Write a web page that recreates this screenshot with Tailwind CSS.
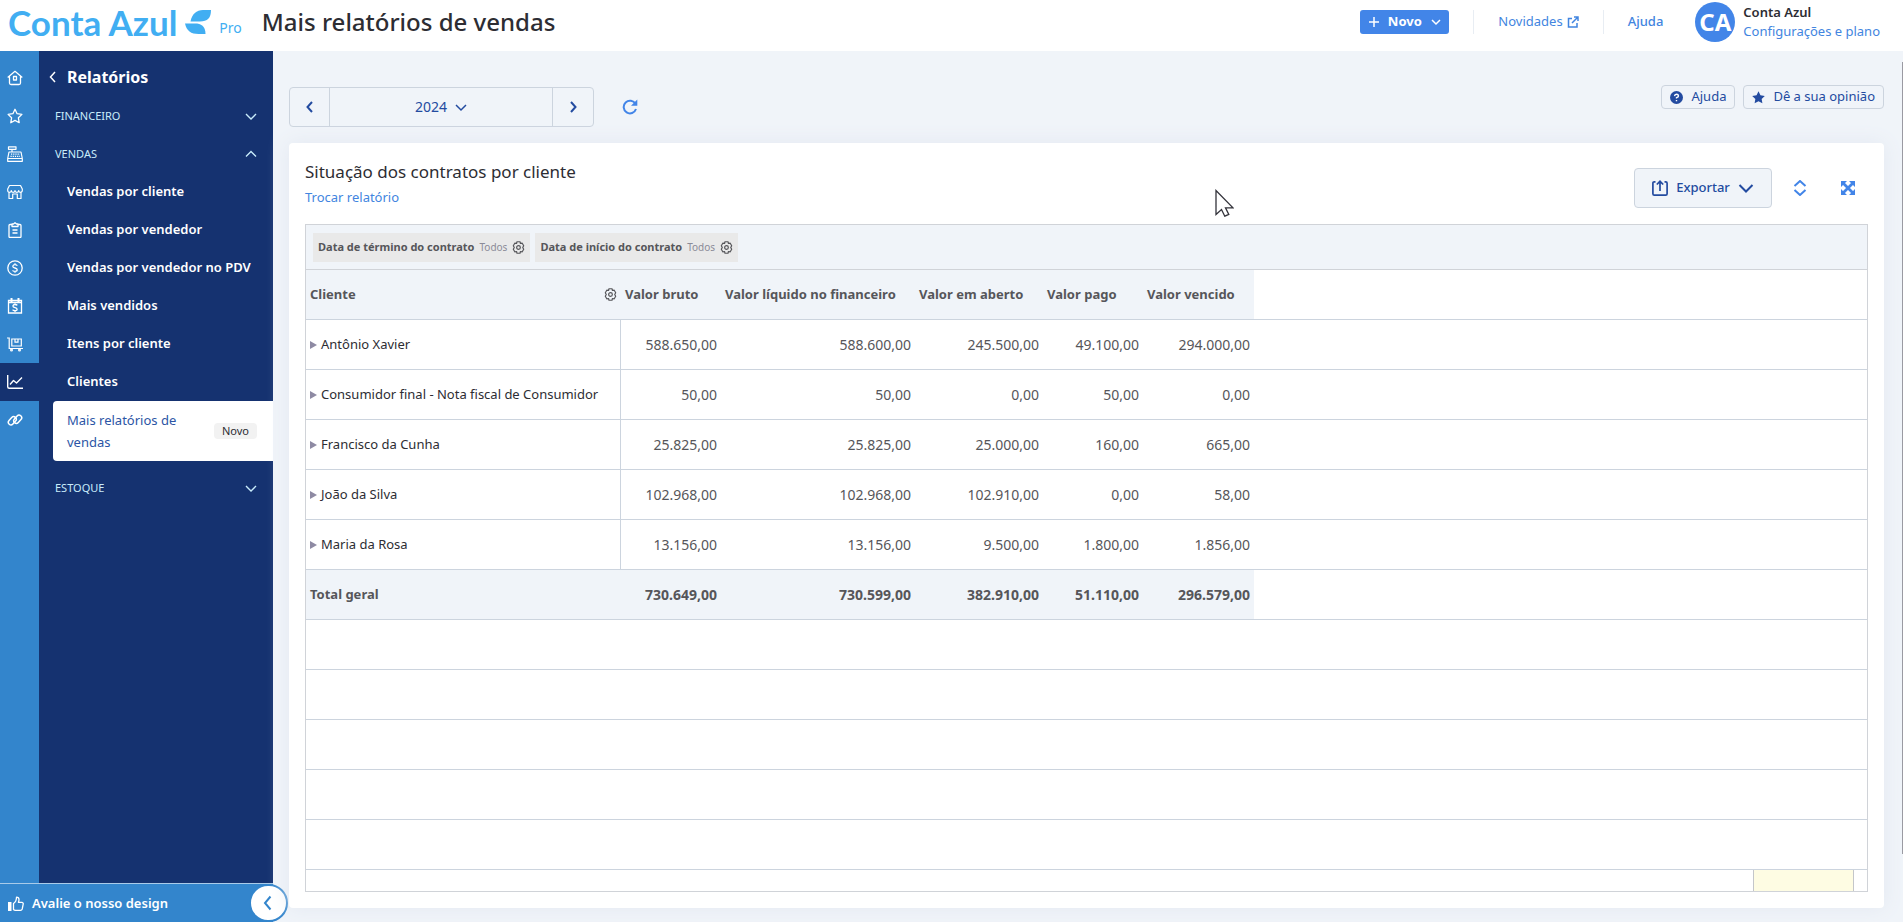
<!DOCTYPE html>
<html lang="pt-BR">
<head>
    <meta charset="UTF-8">
    <meta name="viewport" content="width=device-width, initial-scale=1.0">
    <title>Conta Azul - Mais relatórios de vendas</title>
    <script src="https://cdn.jsdelivr.net/npm/@tailwindcss/browser@4"></script>
</head>
<body class="min-h-screen flex flex-col bg-[#f0f4f9] font-['Noto_Sans',sans-serif] text-[13px] text-[#2d2d33] overflow-hidden">
    <!-- Cabeçalho -->
    <header class="h-[51px] bg-white flex items-center justify-between pl-2 pr-[23px]">
        <div class="flex items-center">
            <a href="#" class="flex items-center text-[#41aef2]" aria-label="Conta Azul Pro">
                <span class="font-['Lato',sans-serif] font-bold text-[35px] leading-8 -mt-2">Conta Azul</span>
                <svg class="w-[26px] h-7 ml-2 -mt-2" viewBox="0 0 26 28" fill="currentColor">
                    <path d="M26 2C26 10 22.500 13.500 15 13.500H5.500C7 6 11.500 2 18 2z"/>
                    <path d="M0 15.500H10C16 15.500 20.500 18 20.500 26H13.500C6 26 1.500 23 0 15.500z"/>
                </svg>
                <span class="text-sm leading-4 ml-2 mt-1">Pro</span>
            </a>
            <h1 class="text-[24px] leading-8 font-medium ml-5 -mt-2">Mais relatórios de vendas</h1>
        </div>
        <div class="flex items-center -mt-2">
            <button class="h-6 w-[89px] rounded-[3px] bg-[#4285e8] text-white font-bold flex items-center justify-center gap-2">
                <svg class="w-3 h-3" viewBox="0 0 12 12" fill="none" stroke="currentColor" stroke-width="1.500"><path d="M6 1v10M1 6h10"/></svg>
                Novo
                <svg class="w-3 h-3" viewBox="0 0 12 12" fill="none" stroke="currentColor" stroke-width="1.500"><path d="M2 4l4 4 4-4"/></svg>
            </button>
            <span class="w-px h-6 bg-[#e8edf3] ml-6 mr-6"></span>
            <a href="#" class="text-[#4285e0] flex items-center gap-1">Novidades
                <svg class="w-3 h-3" viewBox="0 0 12 12" fill="none" stroke="currentColor" stroke-width="1.500"><path d="M5 2.500H1.500v8.500H10V7M7 1h4v4M11 1L5 7"/></svg>
            </a>
            <span class="w-px h-6 bg-[#e8edf3] ml-6 mr-6"></span>
            <a href="#" class="text-[#4285e0] font-medium">Ajuda</a>
            <span class="w-10 h-10 rounded-full bg-[#4285e8] text-white text-[24px] font-bold flex items-center justify-center ml-8">CA</span>
            <div class="ml-2 leading-[19px]">
                <p class="font-semibold">Conta Azul</p>
                <a href="#" class="text-[#4285e0]">Configurações e plano</a>
            </div>
        </div>
    </header>

    <div class="flex flex-1">
        <!-- Menu lateral -->
        <aside class="relative w-[273px] shrink-0 flex flex-col text-white">
            <div class="flex flex-1">
                <nav class="w-[39px] bg-[#3385cc] pt-2 flex flex-col" aria-label="Módulos">
                    <a href="#" aria-label="Início" class="h-[38px] pl-[7px] flex items-center">
                        <svg class="w-4 h-4" viewBox="0 0 16 16" fill="none" stroke="currentColor" stroke-width="1.300" stroke-linejoin="round"><path d="M.7 7.500L8 1.300l7.300 6.200M2.500 6.500V13q0 1.500 1.500 1.500h8q1.500 0 1.500-1.500V6.500"/><rect x="6.500" y="6.500" width="3" height="3.500"/></svg>
                    </a>
                    <a href="#" aria-label="Favoritos" class="h-[38px] pl-[7px] flex items-center">
                        <svg class="w-4 h-4" viewBox="0 0 16 16" fill="none" stroke="currentColor" stroke-width="1.300" stroke-linejoin="round"><path d="M8 1.300l2.100 4.400 4.800.7-3.500 3.400.8 4.900L8 12.400l-4.200 2.300.8-4.900L1.100 6.400l4.800-.7z"/></svg>
                    </a>
                    <a href="#" aria-label="Caixa" class="h-[38px] pl-[7px] flex items-center">
                        <svg class="w-4 h-4" viewBox="0 0 16 16" fill="none" stroke="currentColor" stroke-width="1.200" stroke-linejoin="round"><path d="M1.500.8h7.500v2.500H1.500zM5 3.300V6M2 6h12l1.300 6.500H.7zM.7 12.500h14.600v2.800H.7z"/><path d="M4 8.200h9M3.500 10.300h9.500" stroke-dasharray="1.200 1"/></svg>
                    </a>
                    <a href="#" aria-label="Loja" class="h-[38px] pl-[7px] flex items-center">
                        <svg class="w-4 h-4" viewBox="0 0 16 16" fill="none" stroke="currentColor" stroke-width="1.200" stroke-linejoin="round"><path d="M2.500 1.500h11L15.300 5v1.500a1.800 1.800 0 0 1-3.600 0 1.800 1.800 0 0 1-3.700 0 1.800 1.800 0 0 1-3.700 0 1.800 1.800 0 0 1-3.600 0V5zM2 8.300v6.200h3.700v-4.500h4.600v4.500H14V8.300"/></svg>
                    </a>
                    <a href="#" aria-label="Pedidos" class="h-[38px] pl-[7px] flex items-center">
                        <svg class="w-4 h-4" viewBox="0 0 16 16" fill="none" stroke="currentColor" stroke-width="1.300" stroke-linejoin="round"><path d="M5 2.500H3q-1 0-1 1v11q0 1 1 1h10q1 0 1-1v-11q0-1-1-1h-2M5 4.500V2h1.500L8 .7 9.500 2H11v2.500zM5.500 8h5M5.500 11h5"/></svg>
                    </a>
                    <a href="#" aria-label="Financeiro" class="h-[38px] pl-[7px] flex items-center">
                        <svg class="w-4 h-4" viewBox="0 0 16 16" fill="none" stroke="currentColor" stroke-width="1.300"><circle cx="8" cy="8" r="7.200"/><path d="M10.300 5.800Q9.800 4.600 8 4.600T5.800 6.200Q5.800 7.500 8 8t2.200 1.800Q10.200 11.400 8 11.400T5.700 10.200M8 3.300v1.300M8 11.400v1.300"/></svg>
                    </a>
                    <a href="#" aria-label="Cobranças" class="h-[38px] pl-[7px] flex items-center">
                        <svg class="w-4 h-4" viewBox="0 0 16 16" fill="none" stroke="currentColor" stroke-width="1.300"><path d="M1.500 2.500h13v12.500h-13zM1.500 4.500h13" /><path d="M4.500 0v4M11.500 0v4" stroke-width="2"/><path d="M10.300 7.300Q9.800 6.500 8 6.500T5.900 8Q5.900 9.200 8 9.600t2.100 1.600Q10.100 12.700 8 12.700T5.700 11.700M8 5.300v1.200M8 12.700v1.200"/></svg>
                    </a>
                    <a href="#" aria-label="Estoque" class="h-[38px] pl-[7px] flex items-center">
                        <svg class="w-4 h-4" viewBox="0 0 16 16" fill="none" stroke="currentColor" stroke-width="1.200"><path d="M0 2h2.200v10.500H16M4.800 3h9.500v7H4.800zM8 3v3.200h3V3"/><circle cx="4.500" cy="14" r=".9"/><circle cx="12.500" cy="14" r=".9"/></svg>
                    </a>
                    <a href="#" aria-label="Relatórios" class="h-[38px] pl-[7px] flex items-center bg-[#153270]">
                        <svg class="w-4 h-4" viewBox="0 0 16 16" fill="none" stroke="currentColor" stroke-width="1.400" stroke-linejoin="round"><path d="M.7 1v11.800q0 1.500 1.500 1.500H16M3 10.500L6.500 6.500l3 2.500L15 3.500"/></svg>
                    </a>
                    <a href="#" aria-label="Integrações" class="h-[38px] pl-[7px] flex items-center">
                        <svg class="w-4 h-4" viewBox="0 0 16 16" fill="none" stroke="currentColor" stroke-width="1.500"><rect x="-2.600" y="-4.600" width="5.200" height="9.200" rx="2.600" transform="translate(5.300 8.800) rotate(42)"/><rect x="-2.600" y="-4.600" width="5.200" height="9.200" rx="2.600" transform="translate(10.700 7.200) rotate(42)"/></svg>
                    </a>
                </nav>
                <nav class="flex-1 bg-[#153270] pt-2" aria-label="Relatórios">
                    <a href="#" class="h-[38px] pb-0.5 pl-2 flex items-center gap-2 text-base font-bold">
                        <svg class="w-3 h-3" viewBox="0 0 12 12" fill="none" stroke="currentColor" stroke-width="1.500"><path d="M8 1L3.500 6 8 11"/></svg>
                        Relatórios
                    </a>
                    <button class="w-full h-[38px] pl-4 pr-4 flex items-center justify-between text-[11px] text-[#c9ecfb]">FINANCEIRO
                        <svg class="w-3 h-3" viewBox="0 0 12 12" fill="none" stroke="currentColor" stroke-width="1.400"><path d="M1 4l5 5 5-5"/></svg>
                    </button>
                    <button class="w-full h-[38px] pl-4 pr-4 flex items-center justify-between text-[11px] text-[#c9ecfb]">VENDAS
                        <svg class="w-3 h-3" viewBox="0 0 12 12" fill="none" stroke="currentColor" stroke-width="1.400"><path d="M1 8.500l5-5 5 5"/></svg>
                    </button>
                    <a href="#" class="h-[38px] pl-7 flex items-center font-semibold">Vendas por cliente</a>
                    <a href="#" class="h-[38px] pl-7 flex items-center font-semibold">Vendas por vendedor</a>
                    <a href="#" class="h-[38px] pl-7 flex items-center font-semibold">Vendas por vendedor no PDV</a>
                    <a href="#" class="h-[38px] pl-7 flex items-center font-semibold">Mais vendidos</a>
                    <a href="#" class="h-[38px] pl-7 flex items-center font-semibold">Itens por cliente</a>
                    <a href="#" class="h-[38px] pl-7 flex items-center font-semibold">Clientes</a>
                    <a href="#" class="h-[60px] ml-[14px] pl-[14px] pr-4 rounded-l-[4px] bg-white text-[#2c55a5] leading-[22px] flex items-center justify-between">
                        <span class="w-[130px]">Mais relatórios de vendas</span>
                        <span class="h-4 px-2 rounded-[4px] bg-[#f2f2f2] text-[#2d2d33] text-[11px] leading-4">Novo</span>
                    </a>
                    <button class="w-full h-[38px] mt-2 pl-4 pr-4 flex items-center justify-between text-[11px] text-[#c9ecfb]">ESTOQUE
                        <svg class="w-3 h-3" viewBox="0 0 12 12" fill="none" stroke="currentColor" stroke-width="1.400"><path d="M1 4l5 5 5-5"/></svg>
                    </button>
                </nav>
            </div>
            <a href="#" class="h-[39px] border-t border-[#a9cbe9] bg-[#3385cc] pt-0.5 pl-2 flex items-center gap-2 font-semibold">
                <svg class="w-4 h-4" viewBox="0 0 16 16" fill="none" stroke="currentColor" stroke-width="1.300" stroke-linejoin="round"><path d="M0 6h3.500v9H0z" fill="currentColor" stroke="none"/><path d="M5.500 7.500Q8.500 5.500 8.500 1.200q2.500 0 2.500 2.300 0 1.300-.6 2.800H14q1.500.3 1.200 1.800l-1 4.900q-.4 1.300-1.700 1.300H7.500q-1.300 0-2-.8z"/></svg>
                Avalie o nosso design
            </a>
            <button aria-label="Recolher menu" class="absolute left-[249px] bottom-0 w-[39px] h-[38px] rounded-full bg-white border-2 border-[#3385cc] text-[#3385cc] flex items-center justify-center">
                <svg class="w-4 h-4" viewBox="0 0 16 16" fill="none" stroke="currentColor" stroke-width="2"><path d="M9.500 1.500L4 8l5.500 6.500"/></svg>
            </button>
        </aside>

        <!-- Conteúdo -->
        <main class="relative flex-1 min-w-0 pl-4 pr-[19px] pt-[34px] pb-[14px] flex flex-col gap-4">
            <div class="flex items-start justify-between text-[#234ba0]">
                <div class="flex items-center pt-0.5">
                    <div class="h-10 w-[305px] flex border border-[#ccd4de] rounded-[4px] divide-x divide-[#ccd4de]">
                        <button aria-label="Ano anterior" class="w-10 flex items-center justify-center">
                            <svg class="w-3 h-3" viewBox="0 0 12 12" fill="none" stroke="currentColor" stroke-width="2"><path d="M8 1L3.500 6 8 11"/></svg>
                        </button>
                        <button class="flex-1 flex items-center justify-center gap-2 text-sm">2024
                            <svg class="w-3 h-3" viewBox="0 0 12 12" fill="none" stroke="currentColor" stroke-width="1.500"><path d="M1 4l5 5 5-5"/></svg>
                        </button>
                        <button aria-label="Próximo ano" class="w-10 flex items-center justify-center">
                            <svg class="w-3 h-3" viewBox="0 0 12 12" fill="none" stroke="currentColor" stroke-width="2"><path d="M4 1l4.500 5L4 11"/></svg>
                        </button>
                    </div>
                    <button aria-label="Atualizar" class="ml-7 text-[#4285e8]">
                        <svg class="w-4 h-4" viewBox="0 0 16 16" fill="none" stroke="currentColor" stroke-width="2"><path d="M13.500 5A6.300 6.300 0 1 0 14 10"/><path d="M15.300.5v6.300H9z" fill="currentColor" stroke="none"/></svg>
                    </button>
                </div>
                <div class="flex gap-2">
                    <button class="h-6 px-2 flex items-center gap-2 border border-[#ccd4de] rounded-[4px]">
                        <svg class="w-[13px] h-[13px]" viewBox="0 0 12 12"><circle cx="6" cy="6" r="6" fill="currentColor"/><path d="M4.200 4.700Q4.300 3 6 3t1.800 1.500Q7.800 5.500 6 6.200V7M6 8.200v1.300" fill="none" stroke="#fff" stroke-width="1.300"/></svg>
                        Ajuda
                    </button>
                    <button class="h-6 px-2 flex items-center gap-2 border border-[#ccd4de] rounded-[4px]">
                        <svg class="w-[13px] h-[13px]" viewBox="0 0 12 12" fill="currentColor"><path d="M6 .3l1.800 3.600 4 .6-2.900 2.800.7 4L6 9.400l-3.600 1.900.7-4L.2 4.500l4-.6z"/></svg>
                        Dê a sua opinião
                    </button>
                </div>
            </div>

            <section class="flex-1 bg-white rounded-[4px] shadow-[0_0_20px_#e3e8f1] px-4 pt-[25px] pb-4 flex flex-col gap-4">
                <div class="flex items-start justify-between">
                    <div class="-my-2">
                        <h2 class="text-[17px] leading-6">Situação dos contratos por cliente</h2>
                        <a href="#" class="text-[#4285e0] leading-[26px] block">Trocar relatório</a>
                    </div>
                    <div class="flex items-center text-[#234ba0]">
                        <button class="h-10 w-[138px] rounded-[4px] border border-[#ccd4de] bg-[#f0f4f9] flex items-center justify-center gap-2">
                            <svg class="w-4 h-4" viewBox="0 0 16 16" fill="none" stroke="currentColor" stroke-width="1.700"><path d="M3.500 1.800H2.300Q.9 1.800.9 3.200v10.500q0 1.400 1.400 1.400h11.400q1.400 0 1.400-1.400V3.200q0-1.400-1.400-1.400h-1.200M8 11V1.500M4.800 4.500L8 1.300l3.200 3.200"/></svg>
                            <span class="text-[13px] font-medium">Exportar</span>
                            <svg class="w-4 h-4" viewBox="0 0 16 16" fill="none" stroke="currentColor" stroke-width="2"><path d="M1.500 5L8 11.500 14.500 5"/></svg>
                        </button>
                        <button aria-label="Expandir linhas" class="ml-5 text-[#4285e8]">
                            <svg class="w-4 h-4" viewBox="0 0 16 16" fill="none" stroke="currentColor" stroke-width="2"><path d="M2.500 6L8 1l5.500 5M2.500 10L8 15l5.500-5"/></svg>
                        </button>
                        <button aria-label="Tela cheia" class="ml-8 mr-3 text-[#4285e8]">
                            <svg class="w-4 h-4" viewBox="0 0 16 16" fill="currentColor"><path d="M1 1h6L1 7zM15 1v6L9 1zM1 15V9l6 6zM15 15H9l6-6z"/><path d="M3 3l10 10M13 3L3 13" stroke="currentColor" stroke-width="2.800"/></svg>
                        </button>
                    </div>
                </div>

                <div class="flex-1 border border-[#d0d3d8] text-[#56565a]">
                    <div class="h-[45px] bg-[#f0f4f9] border-b border-[#d0d3d8] px-[7px] flex items-center gap-[5px]">
                        <button class="h-[29px] px-[5px] bg-[#e9e9e9] flex items-center gap-[5px]">
                            <span class="font-bold text-[11px]">Data de término do contrato</span>
                            <span class="text-[10px] text-[#8b8b98]">Todos</span>
                            <svg class="w-[13px] h-[13px]" viewBox="0 0 12 12" fill="none" stroke="currentColor" stroke-width="1.100" stroke-linejoin="round"><path d="M4.600.7h2.800l.4 1.600 1.500-.4 1.500 2.500L9.900 6l.9 1.600-1.500 2.500-1.500-.4-.4 1.600H4.600l-.4-1.600-1.500.4-1.500-2.500L2.100 6l-.9-1.600 1.500-2.500 1.500.4z"/><circle cx="6" cy="6" r="1.700"/></svg>
                        </button>
                        <button class="h-[29px] px-[5px] bg-[#e9e9e9] flex items-center gap-[5px]">
                            <span class="font-bold text-[11px]">Data de início do contrato</span>
                            <span class="text-[10px] text-[#8b8b98]">Todos</span>
                            <svg class="w-[13px] h-[13px]" viewBox="0 0 12 12" fill="none" stroke="currentColor" stroke-width="1.100" stroke-linejoin="round"><path d="M4.600.7h2.800l.4 1.600 1.500-.4 1.500 2.500L9.900 6l.9 1.600-1.500 2.500-1.500-.4-.4 1.600H4.600l-.4-1.600-1.500.4-1.500-2.500L2.100 6l-.9-1.600 1.500-2.500 1.500.4z"/><circle cx="6" cy="6" r="1.700"/></svg>
                        </button>
                    </div>
                    <table class="w-full table-fixed border-separate border-spacing-0 text-right">
                        <colgroup>
                            <col class="w-[315px]"><col class="w-[100px]"><col class="w-[194px]"><col class="w-[128px]"><col class="w-[100px]"><col class="w-[111px]"><col>
                        </colgroup>
                        <thead>
                            <tr class="h-[50px] text-left [&>th]:border-b [&>th]:border-[#ccd4de] [&>th]:px-1 [&>th]:font-bold">
                                <th class="bg-[#f0f4f9]">
                                    <span class="flex items-center justify-between">Cliente
                                        <svg class="w-[13px] h-[13px]" viewBox="0 0 12 12" fill="none" stroke="currentColor" stroke-width="1.100" stroke-linejoin="round"><path d="M4.600.7h2.800l.4 1.600 1.500-.4 1.500 2.500L9.900 6l.9 1.600-1.500 2.500-1.500-.4-.4 1.600H4.600l-.4-1.600-1.500.4-1.500-2.500L2.100 6l-.9-1.600 1.500-2.500 1.500.4z"/><circle cx="6" cy="6" r="1.700"/></svg>
                                    </span>
                                </th>
                                <th class="bg-[#f0f4f9]">Valor bruto</th>
                                <th class="bg-[#f0f4f9]">Valor líquido no financeiro</th>
                                <th class="bg-[#f0f4f9]">Valor em aberto</th>
                                <th class="bg-[#f0f4f9]">Valor pago</th>
                                <th class="bg-[#f0f4f9]">Valor vencido</th>
                                <th></th>
                            </tr>
                        </thead>
                        <tbody class="[&_td]:border-b [&_td]:border-[#ccd4de] [&_td]:px-1 text-sm">
                            <tr class="h-[50px]">
                                <td class="border-r text-left text-[13px] text-[#2d2d33]"><span class="flex items-center gap-1"><svg class="w-[7px] h-2" viewBox="0 0 7 8" fill="#8e8aa3"><path d="M0 0l7 4-7 4z"/></svg>Antônio Xavier</span></td>
                                <td>588.650,00</td><td>588.600,00</td><td>245.500,00</td><td>49.100,00</td><td>294.000,00</td><td></td>
                            </tr>
                            <tr class="h-[50px]">
                                <td class="border-r text-left text-[13px] text-[#2d2d33]"><span class="flex items-center gap-1"><svg class="w-[7px] h-2" viewBox="0 0 7 8" fill="#8e8aa3"><path d="M0 0l7 4-7 4z"/></svg>Consumidor final - Nota fiscal de Consumidor</span></td>
                                <td>50,00</td><td>50,00</td><td>0,00</td><td>50,00</td><td>0,00</td><td></td>
                            </tr>
                            <tr class="h-[50px]">
                                <td class="border-r text-left text-[13px] text-[#2d2d33]"><span class="flex items-center gap-1"><svg class="w-[7px] h-2" viewBox="0 0 7 8" fill="#8e8aa3"><path d="M0 0l7 4-7 4z"/></svg>Francisco da Cunha</span></td>
                                <td>25.825,00</td><td>25.825,00</td><td>25.000,00</td><td>160,00</td><td>665,00</td><td></td>
                            </tr>
                            <tr class="h-[50px]">
                                <td class="border-r text-left text-[13px] text-[#2d2d33]"><span class="flex items-center gap-1"><svg class="w-[7px] h-2" viewBox="0 0 7 8" fill="#8e8aa3"><path d="M0 0l7 4-7 4z"/></svg>João da Silva</span></td>
                                <td>102.968,00</td><td>102.968,00</td><td>102.910,00</td><td>0,00</td><td>58,00</td><td></td>
                            </tr>
                            <tr class="h-[50px]">
                                <td class="border-r text-left text-[13px] text-[#2d2d33]"><span class="flex items-center gap-1"><svg class="w-[7px] h-2" viewBox="0 0 7 8" fill="#8e8aa3"><path d="M0 0l7 4-7 4z"/></svg>Maria da Rosa</span></td>
                                <td>13.156,00</td><td>13.156,00</td><td>9.500,00</td><td>1.800,00</td><td>1.856,00</td><td></td>
                            </tr>
                            <tr class="h-[50px] font-bold">
                                <td class="bg-[#f0f4f9] text-left text-[13px]">Total geral</td>
                                <td class="bg-[#f0f4f9]">730.649,00</td><td class="bg-[#f0f4f9]">730.599,00</td><td class="bg-[#f0f4f9]">382.910,00</td><td class="bg-[#f0f4f9]">51.110,00</td><td class="bg-[#f0f4f9]">296.579,00</td><td></td>
                            </tr>
                            <tr class="h-[50px]"><td colspan="7"></td></tr>
                            <tr class="h-[50px]"><td colspan="7"></td></tr>
                            <tr class="h-[50px]"><td colspan="7"></td></tr>
                            <tr class="h-[50px]"><td colspan="7"></td></tr>
                            <tr class="h-[50px]"><td colspan="7"></td></tr>
                        </tbody>
                    </table>
                    <div class="h-[21px] flex justify-end pr-[13px]">
                        <div class="w-[101px] bg-[#fefce3] border-x border-[#c4c6ca]"></div>
                    </div>
                </div>
            </section>

            <!-- Barra de rolagem -->
            <div class="absolute right-0 top-[11px] bottom-[68px] w-px bg-[#9a9aa2]"></div>
            <!-- Cursor -->
            <svg class="absolute left-[942px] top-[138px] w-[19px] h-7" viewBox="0 0 19 28" fill="#fff" stroke="#33333b" stroke-width="1.300"><path d="M1 1.500v24l5.500-5 3.300 6.700 4-1.800-3.300-6.600H18z"/></svg>
        </main>
    </div>
</body>
</html>
